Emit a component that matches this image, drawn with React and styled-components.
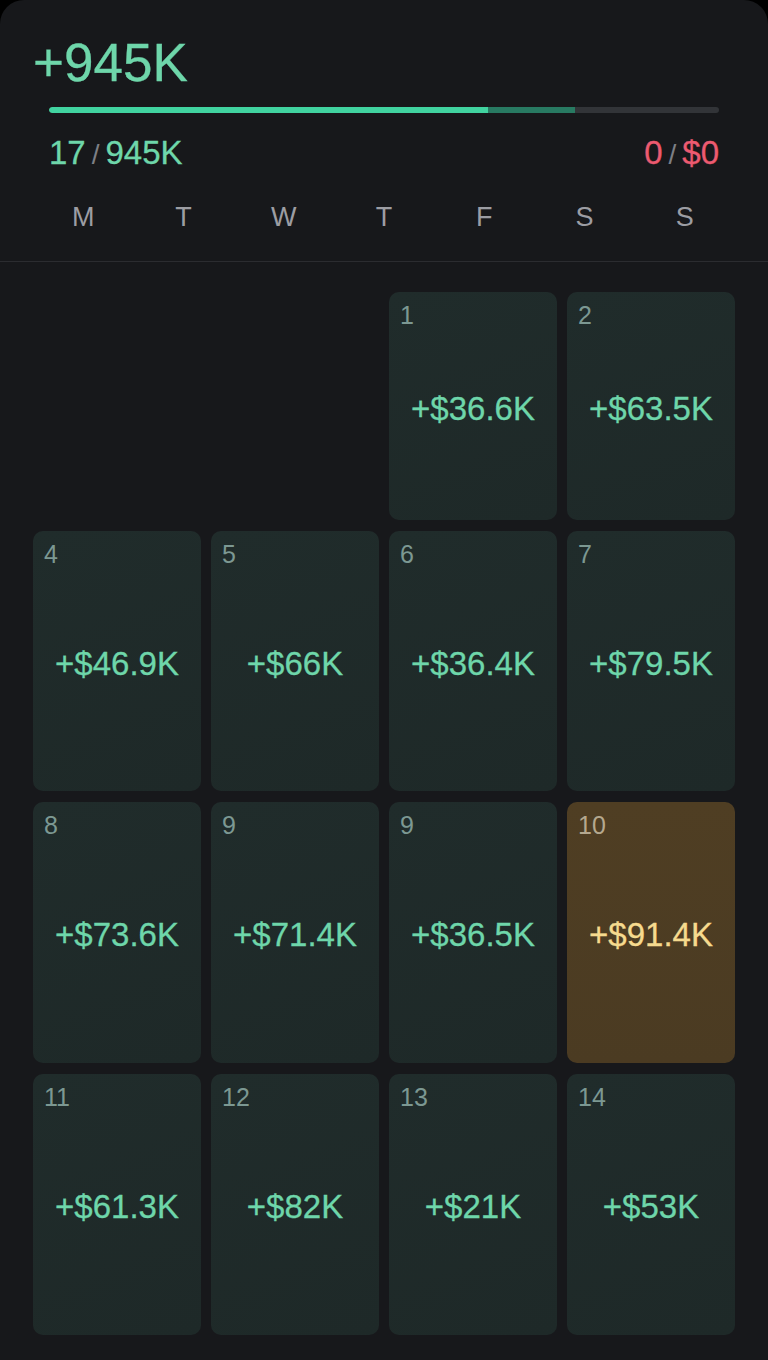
import React from 'react';
import styled, { createGlobalStyle } from 'styled-components';

const GlobalStyle = createGlobalStyle`
  html, body {
    margin: 0;
    padding: 0;
    background: #000;
  }
  body {
    font-family: "Liberation Sans", Arial, sans-serif;
  }
`;

const Panel = styled.div`
  width: 768px;
  height: 1360px;
  box-sizing: border-box;
  background: #17181b;
  border-radius: 24px 24px 0 0;
  overflow: hidden;
`;

const Header = styled.header`
  padding: 36px 33px 30px;
  border-bottom: 1px solid #2b2c30;
`;

const Total = styled.div`
  font-size: 53px;
  line-height: 1;
  color: #6ed6aa;
  -webkit-text-stroke: 0.3px #6ed6aa;
`;

const Track = styled.div`
  margin: 18px 16px 0 16px;
  height: 6px;
  border-radius: 3px;
  background: #323438;
  display: flex;
  overflow: hidden;
`;

const Fill = styled.div`
  height: 100%;
  background: ${p => p.color};
  border-radius: ${p => (p.round ? '3px' : '0')};
`;

const Stats = styled.div`
  margin: 23px 16px 0 16px;
  display: flex;
  justify-content: space-between;
  font-size: 33px;
  line-height: 1;
`;

const Stat = styled.span`
  color: ${p => p.color};
  -webkit-text-stroke: 0.3px ${p => p.color};
`;

const Slash = styled.span`
  color: #7d7f85;
  font-size: 28px;
  margin: 0 6px;
`;

const Weekdays = styled.div`
  margin-top: 35px;
  display: grid;
  grid-template-columns: repeat(7, 1fr);
  font-size: 27px;
  line-height: 1;
  color: #9c9da3;
  text-align: center;
`;

const Grid = styled.div`
  padding: 30px 33px 0;
  display: grid;
  grid-template-columns: repeat(4, 1fr);
  grid-template-rows: 228px 260px 261px 261px;
  column-gap: 10px;
  row-gap: 11px;
`;

const Card = styled.div`
  position: relative;
  border-radius: 10px;
  background: ${p =>
    p.best
      ? 'linear-gradient(180deg, #4f3e23 0%, #4b3b22 100%)'
      : 'linear-gradient(160deg, #202c2b 0%, #1e2928 100%)'};
  display: flex;
  align-items: center;
  justify-content: center;
`;

const Empty = styled.div``;

const DayNum = styled.span`
  position: absolute;
  top: 11px;
  left: 11px;
  font-size: 25px;
  line-height: 1;
  color: ${p => (p.best ? '#b5a88f' : '#7c9892')};
`;

const Amount = styled.span`
  font-size: 33px;
  line-height: 1;
  margin-top: 4px;
  color: ${p => (p.best ? '#f6da8e' : '#6ed6aa')};
  -webkit-text-stroke: 0.3px ${p => (p.best ? '#f6da8e' : '#6ed6aa')};
`;

const days = [
  null,
  null,
  { n: 1, v: '+$36.6K' },
  { n: 2, v: '+$63.5K' },
  { n: 4, v: '+$46.9K' },
  { n: 5, v: '+$66K' },
  { n: 6, v: '+$36.4K' },
  { n: 7, v: '+$79.5K' },
  { n: 8, v: '+$73.6K' },
  { n: 9, v: '+$71.4K' },
  { n: 9, v: '+$36.5K' },
  { n: 10, v: '+$91.4K', best: true },
  { n: 11, v: '+$61.3K' },
  { n: 12, v: '+$82K' },
  { n: 13, v: '+$21K' },
  { n: 14, v: '+$53K' },
];

export default function App() {
  return (
    <>
      <GlobalStyle />
      <Panel>
        <Header>
          <Total>+945K</Total>
          <Track>
            <Fill color="#41d3a0" round style={{ width: '66%' }} />
            <Fill color="#287a62" style={{ width: '13%', marginLeft: '-3px' }} />
          </Track>
          <Stats>
            <span>
              <Stat color="#6ed6aa">17</Stat>
              <Slash>/</Slash>
              <Stat color="#6ed6aa">945K</Stat>
            </span>
            <span>
              <Stat color="#ec5a70">0</Stat>
              <Slash>/</Slash>
              <Stat color="#ec5a70">$0</Stat>
            </span>
          </Stats>
          <Weekdays>
            {['M', 'T', 'W', 'T', 'F', 'S', 'S'].map((d, i) => (
              <span key={i}>{d}</span>
            ))}
          </Weekdays>
        </Header>
        <Grid>
          {days.map((d, i) =>
            d ? (
              <Card key={i} best={d.best}>
                <DayNum best={d.best}>{d.n}</DayNum>
                <Amount best={d.best}>{d.v}</Amount>
              </Card>
            ) : (
              <Empty key={i} />
            )
          )}
        </Grid>
      </Panel>
    </>
  );
}
